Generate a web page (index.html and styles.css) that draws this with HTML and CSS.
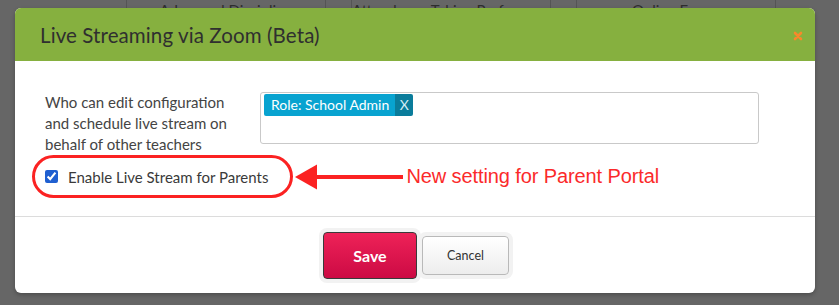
FILE: index.html
```html
<!DOCTYPE html>
<html>
 <head>
  <title>Live Streaming via Zoom (Beta)</title>
  <link rel="stylesheet" href="styles.css">
 </head>
 <body>
   <div class="page">
     <div class="tabs">
       <div class="tab">Advanced Discipline</div>
       <div class="tab">Attendance Taking Preferences</div>
       <div class="tab">Online Forms</div>
     </div>
   </div>

   <div class="modal">
     <div class="modal-header">
       <h1 class="modal-title">Live Streaming via Zoom (Beta)</h1>
       <svg class="close" width="10" height="10" viewBox="0 0 10 10">
         <path d="M2 2 L8 8 M8 2 L2 8" stroke="#f7892b" stroke-width="2.6" stroke-linecap="round"/>
       </svg>
     </div>

     <div class="modal-body">
       <div class="field">
         <label class="field-label">Who can edit configuration and schedule live stream on behalf of other teachers</label>
         <div class="tag-input">
           <span class="tag"><span class="tag-text">Role: School Admin</span><span class="tag-remove">X</span></span>
         </div>
       </div>

       <div class="check-row">
         <div class="highlight">
           <input type="checkbox" id="parents" checked>
           <label for="parents">Enable Live Stream for Parents</label>
         </div>
         <svg class="arrow" width="108" height="28" viewBox="0 0 108 28">
           <polygon points="0,14 22,1.5 22,26.5" fill="#fb2222"/>
           <rect x="20" y="12" width="88" height="4" fill="#fb2222"/>
         </svg>
         <span class="note">New setting for Parent Portal</span>
       </div>
     </div>

     <div class="modal-footer">
       <button class="btn btn-save">Save</button>
       <button class="btn btn-cancel">Cancel</button>
     </div>
   </div>
 </body>
</html>
```

FILE: styles.css
```css
html, body { margin: 0; padding: 0; }
body
{
 background: #666666;
 width: 839px;
 height: 305px;
 overflow: hidden;
 font-family: Lato, "Open Sans", sans-serif;
}

/* page behind the dimmed overlay */
.tabs
{
 display: flex;
 gap: 25px;
 padding-left: 126px;
}
.tab
{
 width: 200px;
 height: 24px;
 border-left: 1px solid #555;
 border-right: 1px solid #555;
 box-sizing: border-box;
 text-align: center;
 font-size: 15px;
 line-height: 20px;
 padding-top: 0;
 color: #2e2e2e;
 white-space: nowrap;
 overflow: hidden;
}

/* the dialog sits over the page */
.modal
{
 position: absolute;
 left: 15px;
 top: 8px;
 width: 800px;
 height: 285px;
 background: #fff;
 border-radius: 6px;
 box-shadow: 0 2px 4px rgba(0,0,0,0.25);
 display: flex;
 flex-direction: column;
 overflow: hidden;
}
.modal-header
{
 background: #86b03f;
 height: 53px;
 display: flex;
 align-items: center;
 justify-content: space-between;
 padding: 0 12px 0 25px;
}
.modal-title
{
 margin: 0;
 font-size: 20.5px;
 font-weight: normal;
 color: #2f2f2f;
 letter-spacing: 0.1px;
}
.close { margin-top: 2px; }

.modal-body
{
 height: 155px;
 box-sizing: border-box;
 padding: 31px 0 0 17px;
}
.field
{
 display: flex;
 align-items: flex-start;
}
.field-label
{
 width: 200px;
 padding-left: 13px;
 margin-right: 15px;
 font-size: 15px;
 line-height: 21px;
 color: #444;
}
.tag-input
{
 width: 499px;
 height: 52px;
 box-sizing: border-box;
 border: 1px solid #c9c9c9;
 border-radius: 3px;
 padding: 1px 3px;
}
.tag
{
 display: inline-flex;
 height: 22px;
 border-radius: 2px;
 overflow: hidden;
 font-size: 14px;
 line-height: 22px;
 color: #fff;
}
.tag-text
{
 background: #08a3d0;
 padding: 0 6px 0 7px;
}
.tag-remove
{
 background: #0a7c9b;
 color: #d5eef6;
 width: 18px;
 text-align: center;
}

.check-row
{
 display: flex;
 align-items: center;
}
.highlight
{
 display: flex;
 align-items: center;
 height: 37px;
 padding: 0 22px 0 10px;
 border: 3px solid #fb2222;
 border-radius: 22px;
 font-size: 15px;
 color: #3a3a3a;
}
.highlight input
{
 width: 13px;
 height: 13px;
 margin: 0 10px 0 0;
 accent-color: #1f5fd0;
}
.arrow { margin-left: 2px; }
.note
{
 margin-left: 3px;
 font-family: "Liberation Sans", Arial, sans-serif;
 font-size: 20px;
 color: #fb2a2a;
 letter-spacing: -0.1px;
}

.modal-footer
{
 flex: 1;
 border-top: 1px solid #dcdcdc;
 display: flex;
 align-items: center;
 justify-content: center;
 gap: 5px;
 padding-left: 2px;
}
.btn
{
 font-family: Lato, "Open Sans", sans-serif;
 border-radius: 4px;
 box-shadow: 0 0 0 4px #f2f2f2;
 cursor: pointer;
}
.btn-save
{
 width: 94px;
 height: 47px;
 border: 1px solid #3a3a3a;
 background: linear-gradient(#ee2258, #cc0a44);
 color: #fff;
 font-size: 16px;
 font-weight: bold;
}
.btn-cancel
{
 width: 87px;
 height: 39px;
 border: 1px solid #b9b9b9;
 background: linear-gradient(#ffffff, #ededed);
 color: #333;
 font-size: 12.5px;
}
```
